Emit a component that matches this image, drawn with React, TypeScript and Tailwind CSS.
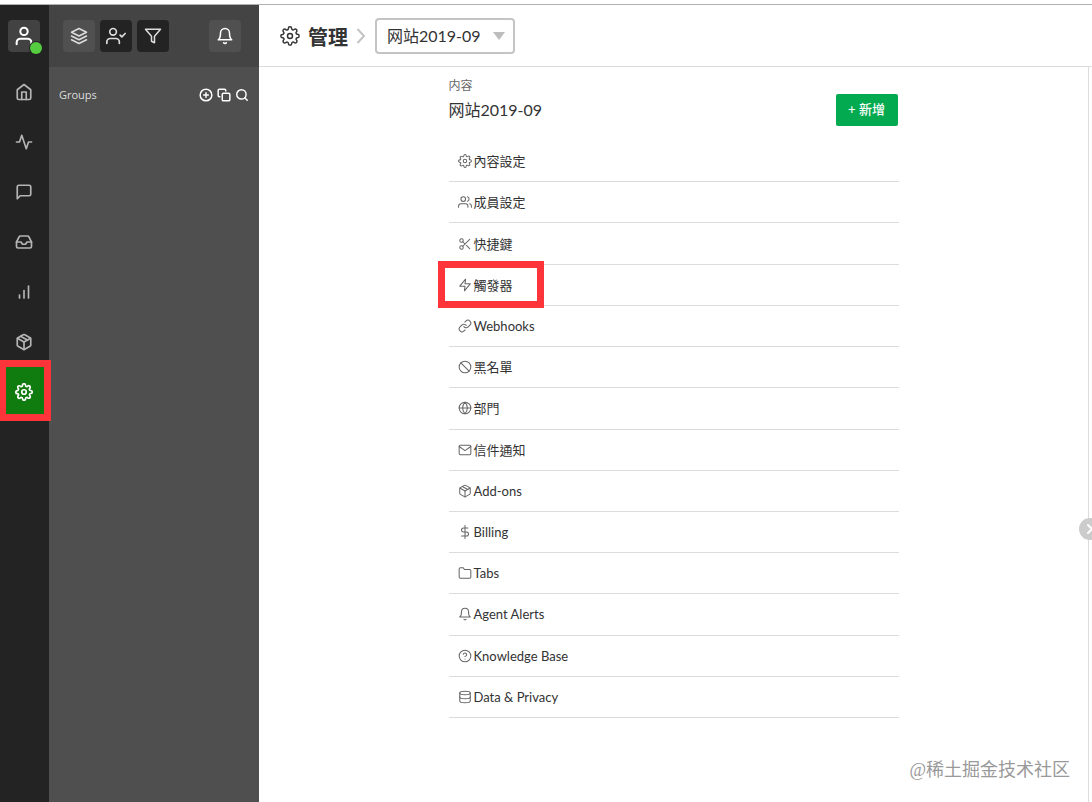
import React from "react";
import type { IconType } from "react-icons";
import {
  FiActivity,
  FiBarChart,
  FiBell,
  FiChevronRight,
  FiCopy,
  FiDatabase,
  FiDollarSign,
  FiFilter,
  FiFolder,
  FiGlobe,
  FiHelpCircle,
  FiHome,
  FiInbox,
  FiLayers,
  FiMail,
  FiMessageSquare,
  FiPackage,
  FiPlusCircle,
  FiScissors,
  FiSearch,
  FiSettings,
  FiSlash,
  FiUser,
  FiUsers,
  FiZap,
} from "react-icons/fi";
import { LuLink } from "react-icons/lu";

type Entry = { label: string; icon: IconType; marked?: boolean };

const navigation: Entry[] = [
  { label: "Home", icon: FiHome },
  { label: "Activity", icon: FiActivity },
  { label: "Chat", icon: FiMessageSquare },
  { label: "Inbox", icon: FiInbox },
  { label: "Reports", icon: FiBarChart },
  { label: "Packages", icon: FiPackage },
  { label: "Settings", icon: FiSettings, marked: true },
];

const settings: Entry[] = [
  { label: "內容設定", icon: FiSettings },
  { label: "成員設定", icon: FiUsers },
  { label: "快捷鍵", icon: FiScissors },
  { label: "觸發器", icon: FiZap, marked: true },
  { label: "Webhooks", icon: LuLink },
  { label: "黑名單", icon: FiSlash },
  { label: "部門", icon: FiGlobe },
  { label: "信件通知", icon: FiMail },
  { label: "Add-ons", icon: FiPackage },
  { label: "Billing", icon: FiDollarSign },
  { label: "Tabs", icon: FiFolder },
  { label: "Agent Alerts", icon: FiBell },
  { label: "Knowledge Base", icon: FiHelpCircle },
  { label: "Data & Privacy", icon: FiDatabase },
];

function UserCheck() {
  return (
    <svg
      viewBox="0 0 24 24"
      className="size-5"
      fill="none"
      stroke="currentColor"
      strokeWidth="2"
      strokeLinecap="round"
      strokeLinejoin="round"
    >
      <circle cx="8.5" cy="7" r="4" />
      <path d="M16 21v-2a4 4 0 0 0-4-4H5a4 4 0 0 0-4 4v2" />
      <path d="M17 11l2 2 4-4" />
    </svg>
  );
}

function Rail() {
  return (
    <nav aria-label="Main" className="w-[49px] shrink-0 bg-[#232323]">
      <div className="flex h-[62px] items-center px-2">
        <button
          aria-label="Profile"
          className="relative flex size-8 items-center justify-center rounded-sm bg-[#424242] text-white"
        >
          <FiUser className="size-[22px]" strokeWidth={2.25} />
          <span className="absolute -right-0.5 -bottom-0.5 size-3 rounded-full bg-[#56cc41] ring-1 ring-[#232323]" />
        </button>
      </div>
      <ul>
        {navigation.map(({ label, icon: Icon, marked }) => (
          <li key={label} className="relative">
            <a
              href="#"
              aria-label={label}
              className={
                marked
                  ? "flex h-[50px] items-center bg-[#107c10] pl-[15px] text-white"
                  : "flex h-[50px] items-center pl-[15px] text-[#b4b4b4]"
              }
            >
              <Icon className="size-[18px]" strokeWidth={2.25} />
            </a>
            {marked && (
              <span className="pointer-events-none absolute -top-[7px] -right-0.5 -bottom-1 left-0 border-[7px] border-l-[6px] border-[#fd3439]" />
            )}
          </li>
        ))}
      </ul>
    </nav>
  );
}

function GroupsPanel() {
  return (
    <aside className="w-[210px] shrink-0 bg-[#4f4f4f] text-[#dddddd]">
      <div className="flex h-[62px] items-center gap-[5px] bg-[#444444] pr-[18px] pl-3.5">
        <button aria-label="All" className="flex size-8 items-center justify-center rounded-sm bg-[#505050]">
          <FiLayers className="size-[18px]" />
        </button>
        <button aria-label="Assigned" className="flex size-8 items-center justify-center rounded-sm bg-[#232323]">
          <UserCheck />
        </button>
        <button aria-label="Filter" className="flex size-8 items-center justify-center rounded-sm bg-[#232323]">
          <FiFilter className="size-[18px]" />
        </button>
        <button
          aria-label="Notifications"
          className="ml-auto flex size-8 items-center justify-center rounded-sm bg-[#505050] text-white"
        >
          <FiBell className="size-[18px]" />
        </button>
      </div>
      <div className="flex items-center justify-between px-2.5 pt-[17px]">
        <h2 className="font-['Open_Sans','Noto_Sans',sans-serif] text-[11px] leading-[22px]">Groups</h2>
        <div className="flex items-center gap-1 text-white">
          <button aria-label="Add group">
            <FiPlusCircle className="size-3.5" strokeWidth={2.5} />
          </button>
          <button aria-label="Copy group">
            <FiCopy className="size-3.5" strokeWidth={2.5} />
          </button>
          <button aria-label="Search groups">
            <FiSearch className="size-3.5" strokeWidth={2.5} />
          </button>
        </div>
      </div>
    </aside>
  );
}

function Header() {
  return (
    <header className="flex h-[62px] items-center border-b border-[#dcdcdc] pl-[21px]">
      <FiSettings className="size-5" strokeWidth={1.75} />
      <h1 className="ml-2 pt-0.5 text-xl font-bold">管理</h1>
      <svg viewBox="0 0 10 16" className="mr-[9px] ml-2 h-4 w-2.5" fill="none" stroke="#c4c4c4" strokeWidth="2">
        <path d="M1.5 1l6.5 7-6.5 7" />
      </svg>
      <div className="relative">
        <select
          aria-label="内容"
          className="h-9 w-[140px] appearance-none rounded-sm border-2 border-[#c4c4c4] bg-white pl-2.5 text-base leading-5"
        >
          <option>网站2019-09</option>
        </select>
        <svg viewBox="0 0 12 8" className="pointer-events-none absolute top-3.5 right-2.5 h-2 w-3" fill="#bdbdbd">
          <path d="M0 0h12L6 8z" />
        </svg>
      </div>
    </header>
  );
}

export default function App() {
  return (
    <div className="flex min-h-screen flex-col overflow-hidden bg-white pt-1 font-['Lato','Noto_Sans_CJK_SC',sans-serif] text-[#333333]">
      <div className="flex grow border-t border-[#b0b0b0]">
        <Rail />
        <GroupsPanel />
        <div className="flex min-w-0 grow flex-col">
          <Header />
          <div className="relative mr-[3px] flex grow flex-col border-r border-[#dcdcdc]">
            <main className="mx-auto w-full max-w-[450px] pt-[9px]">
              <div className="flex items-end justify-between">
                <div>
                  <p className="text-xs leading-5 text-[#666666]">内容</p>
                  <p className="text-base leading-7">网站2019-09</p>
                </div>
                <button className="mr-px -mb-0.5 flex h-8 min-w-[62px] items-center justify-center rounded-xs bg-[#04aa4f] px-3 text-[13px] font-medium text-white">
                  + 新增
                </button>
              </div>
              <ul className="mt-[17px] grid min-h-[577px] auto-rows-fr">
                {settings.map(({ label, icon: Icon, marked }) => (
                  <li key={label} className="relative flex border-b border-[#dcdcdc]">
                    <a
                      href="#"
                      className="flex grow items-center gap-0.5 pl-[9px] font-['Lato','Noto_Sans_CJK_TC',sans-serif] text-[13px] leading-5"
                    >
                      <Icon className="size-3.5 text-[#666666]" strokeWidth={1.75} />
                      {label}
                    </a>
                    {marked && (
                      <span className="pointer-events-none absolute -top-1 -bottom-[3px] -left-[11px] z-10 w-[106px] border-[7px] border-[#fd3439]" />
                    )}
                  </li>
                ))}
              </ul>
            </main>
            <p className="mt-auto mr-[18px] mb-[18px] self-end font-['Liberation_Serif','Noto_Sans_CJK_SC',sans-serif] text-lg leading-7 text-[#999999]">
              @稀土掘金技术社区
            </p>
            <button
              aria-label="Expand"
              className="absolute top-[451px] -right-[13px] flex size-[22px] items-center justify-center rounded-full bg-[#cccccc] text-white"
            >
              <FiChevronRight className="size-4" strokeWidth={3} />
            </button>
          </div>
        </div>
      </div>
    </div>
  );
}
